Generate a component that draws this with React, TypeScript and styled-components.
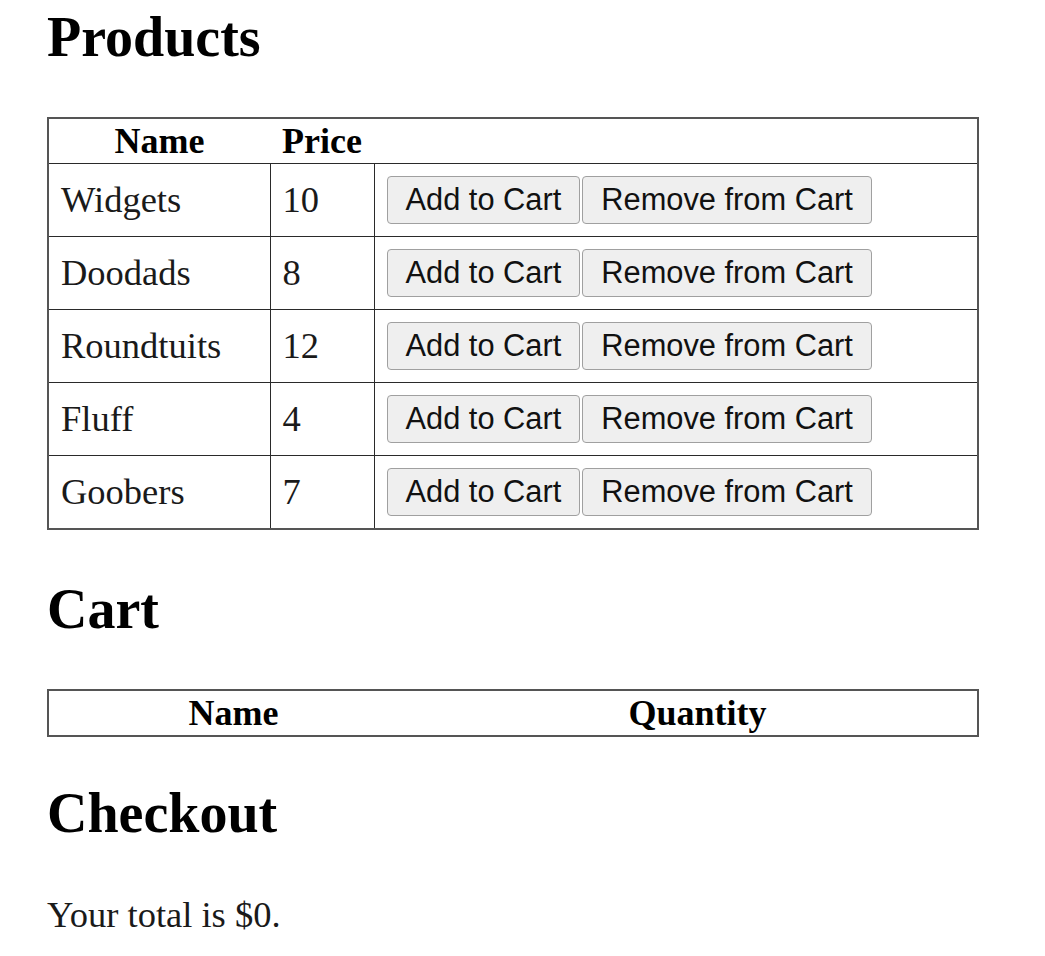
import React from "react";
import styled, { createGlobalStyle } from "styled-components";

const Global = createGlobalStyle`
  html, body { margin: 0; padding: 0; background: #fff; }
  body { font-family: "Liberation Serif", "Times New Roman", serif; color: #111; }
`;

const Page = styled.div`
  display: flex;
  flex-direction: column;
  padding: 6px 66px 0 47px;
`;

const Heading = styled.h1<{ $gapBelow: number }>`
  margin: 0 0 ${(p) => p.$gapBelow}px 0;
  font-size: 56px;
  line-height: 63px;
  font-weight: 700;
  color: #000;
`;

const Table = styled.table<{ $gapBelow: number }>`
  width: 932px;
  border-collapse: collapse;
  border: 2px solid #555;
  margin-bottom: ${(p) => p.$gapBelow}px;
  font-size: 36.5px;
`;

const Th = styled.th`
  font-weight: 700;
  font-size: 36px;
  line-height: 42px;
  padding: 1px 0 1px;
  text-align: center;
  color: #000;
`;

const Td = styled.td`
  border: 1.5px solid #2a2a2a;
  padding: 0 12px;
  height: 72px;
  line-height: 42px;
  vertical-align: middle;
  color: #1a1a1a;
`;

const Actions = styled.div`
  display: flex;
  gap: 2px;
`;

const Button = styled.button`
  font-family: "Liberation Sans", Arial, sans-serif;
  font-size: 30.8px;
  line-height: 36px;
  height: 48px;
  padding: 0 18px;
  background: #efefef;
  border: 1.5px solid #a0a0a0;
  border-radius: 4px;
  color: #111;
  cursor: pointer;
`;

const Total = styled.p`
  margin: 0;
  font-size: 36.5px;
  line-height: 42px;
  color: #1a1a1a;
`;

const products = [
  { name: "Widgets", price: 10 },
  { name: "Doodads", price: 8 },
  { name: "Roundtuits", price: 12 },
  { name: "Fluff", price: 4 },
  { name: "Goobers", price: 7 },
];

export default function App() {
  return (
    <>
      <Global />
      <Page>
        <Heading $gapBelow={48}>Products</Heading>
        <Table $gapBelow={48}>
          <colgroup>
            <col style={{ width: 222 }} />
            <col style={{ width: 104 }} />
            <col />
          </colgroup>
          <thead>
            <tr>
              <Th>Name</Th>
              <Th>Price</Th>
              <Th />
            </tr>
          </thead>
          <tbody>
            {products.map((p) => (
              <tr key={p.name}>
                <Td>{p.name}</Td>
                <Td>{p.price}</Td>
                <Td>
                  <Actions>
                    <Button>Add to Cart</Button>
                    <Button>Remove from Cart</Button>
                  </Actions>
                </Td>
              </tr>
            ))}
          </tbody>
        </Table>
        <Heading as="h2" $gapBelow={48}>Cart</Heading>
        <Table $gapBelow={45}>
          <colgroup>
            <col style={{ width: 370 }} />
            <col />
          </colgroup>
          <thead>
            <tr>
              <Th>Name</Th>
              <Th>Quantity</Th>
            </tr>
          </thead>
          <tbody />
        </Table>
        <Heading as="h2" $gapBelow={49}>Checkout</Heading>
        <Total>Your total is $0.</Total>
      </Page>
    </>
  );
}
